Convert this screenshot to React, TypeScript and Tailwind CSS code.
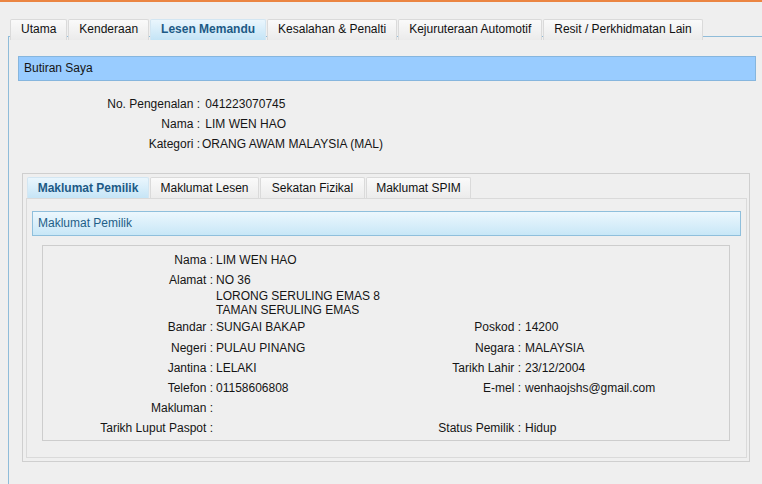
import React from "react";

const topTabs = [
  "Utama",
  "Kenderaan",
  "Lesen Memandu",
  "Kesalahan & Penalti",
  "Kejuruteraan Automotif",
  "Resit / Perkhidmatan Lain",
];

const innerTabs = [
  { label: "Maklumat Pemilik", w: "w-[122px]" },
  { label: "Maklumat Lesen", w: "w-[109px]" },
  { label: "Sekatan Fizikal", w: "w-[105px]" },
  { label: "Maklumat SPIM", w: "w-[105px]" },
];

function Tab({ label, active, className }: { label: string; active: boolean; className: string }) {
  return (
    <div
      className={`${className} flex items-center pb-[2px] border border-b-0 rounded-t-[2px] whitespace-nowrap ${
        active
          ? "bg-gradient-to-b from-[#eaf6fd] to-[#c4e4f6] border-[#d3e6f2] font-bold text-[#1d5a86]"
          : "bg-gradient-to-b from-[#fafafa] to-[#ebebeb] border-[#dadada] text-[#111]"
      }`}
    >
      {label}
    </div>
  );
}

function Row({
  label,
  value,
  label2,
  value2,
  className = "",
}: {
  label: string;
  value?: React.ReactNode;
  label2?: string;
  value2?: string;
  className?: string;
}) {
  return (
    <div className={`flex items-start ${className}`}>
      <div className="w-[170px] h-[20px] leading-[20px] text-right">{label}</div>
      <div className="w-[200px] pl-[3px] leading-[20px]">{value}</div>
      <div className="w-[108px] h-[20px] leading-[20px] text-right">{label2}</div>
      <div className="flex-1 pl-[4px] leading-[20px]">{value2}</div>
    </div>
  );
}

export default function App() {
  return (
    <div className="w-[762px] h-[484px] overflow-hidden bg-[#efefef] flex flex-col font-['Liberation_Sans',Arial,sans-serif] text-[12px] text-[#151515]">
      <div className="h-[2px] bg-[#eb8542]" />

      {/* Top tabs */}
      <div className="relative z-10 mt-[17px] ml-[10px] flex gap-px">
        {topTabs.map((t) => (
          <Tab key={t} label={t} active={t === "Lesen Memandu"} className="h-[21px] px-[10px]" />
        ))}
      </div>

      {/* Main panel */}
      <div className="flex-1 ml-[8px] -mt-[4px] border-l border-t border-[#8fbcd9] pt-[19px] pl-[9px] pr-[6px]">
        <div className="h-[25px] bg-[#99ccff] border border-[#86b6de] pl-[5px] leading-[23px]">Butiran Saya</div>

        <div className="mt-[13px]">
          {[
            ["No. Pengenalan :", " 041223070745"],
            ["Nama :", " LIM WEN HAO"],
            ["Kategori :", "ORANG AWAM MALAYSIA (MAL)"],
          ].map(([l, v]) => (
            <div key={l} className="flex h-[20px] items-center">
              <div className="w-[182px] text-right">{l}</div>
              <div className="pl-[2px] whitespace-pre">{v}</div>
            </div>
          ))}
        </div>

        {/* Inner tab box */}
        <div className="mt-[19px] ml-[4px] w-[728px] h-[289px] border border-[#cfcfcf] pt-[3px] pl-[3px] pr-[2px] pb-[3px] flex flex-col">
          <div className="ml-px flex gap-px">
            {innerTabs.map((t) => (
              <Tab
                key={t.label}
                label={t.label}
                active={t.label === "Maklumat Pemilik"}
                className={`h-[22px] ${t.w} justify-center`}
              />
            ))}
          </div>
          <div className="flex-1 -mt-px border border-[#dadada] pt-[12px] px-[5px]">
            <div className="h-[25px] border border-[#8fbfdc] bg-gradient-to-b from-[#ecf7fd] to-[#c8e7f7] pl-[5px] leading-[23px] text-[#1f5f88]">
              Maklumat Pemilik
            </div>

            <div className="mt-[9px] ml-[10px] mr-[11px] h-[196px] border border-[#cdcdcd] pt-[4px]">
              <Row label="Nama :" value="LIM WEN HAO" />
              <Row
                label="Alamat :"
                value={
                  <div>
                    <div className="h-[19px]">NO 36</div>
                    <div className="leading-[14px]">LORONG SERULING EMAS 8</div>
                    <div className="leading-[14px]">TAMAN SERULING EMAS</div>
                  </div>
                }
              />
              <Row label="Bandar :" value="SUNGAI BAKAP" label2="Poskod :" value2="14200" />
              <Row className="mt-px" label="Negeri :" value="PULAU PINANG" label2="Negara :" value2="MALAYSIA" />
              <Row label="Jantina :" value="LELAKI" label2="Tarikh Lahir :" value2="23/12/2004" />
              <Row label="Telefon :" value="01158606808" label2="E-mel :" value2="wenhaojshs@gmail.com" />
              <Row label="Makluman :" />
              <Row label="Tarikh Luput Paspot :" label2="Status Pemilik :" value2="Hidup" />
            </div>
          </div>
        </div>
      </div>
    </div>
  );
}
